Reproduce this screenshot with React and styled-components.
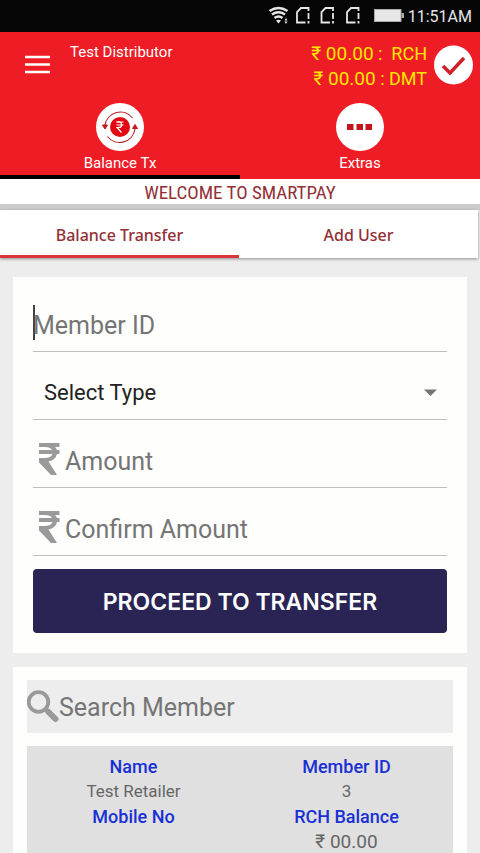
import React, { useState } from "react";
import styled, { createGlobalStyle } from "styled-components";

const GlobalStyle = createGlobalStyle`
  * {
    box-sizing: border-box;
  }
  body {
    margin: 0;
    background: #ededed;
    font-family: "Roboto", sans-serif;
  }
  button,
  input,
  select {
    font-family: inherit;
    margin: 0;
  }
`;

const Screen = styled.div`
  display: flex;
  flex-direction: column;
  height: 100vh;
  overflow: hidden;
`;

const StatusBar = styled.div`
  display: flex;
  align-items: center;
  justify-content: flex-end;
  flex: none;
  height: 32px;
  padding-right: 8px;
  background: #050505;
  color: #e6e6e6;
  font-size: 16px;
`;

const Signals = styled.svg`
  margin-right: 4px;
`;

const Header = styled.header`
  flex: none;
  background: #ee1c25;
  color: #ffffff;
`;

const TopRow = styled.div`
  display: flex;
  height: 66px;
  padding: 10px 7px 0 24px;
`;

const IconButton = styled.button`
  display: flex;
  align-self: flex-start;
  padding: 0;
  border: none;
  background: none;
  cursor: pointer;
`;

const UserName = styled.div`
  flex: 1;
  margin-left: 20px;
  font-size: 15px;
  line-height: 20px;
`;

const Balances = styled.div`
  margin-right: 7px;
  color: #ffe600;
  font-size: 18px;
  line-height: 24px;
  text-align: right;
  white-space: pre;
`;

const BalanceRow = styled.div`
  height: 25px;
`;

const Money = styled.span`
  font-size: 19px;
`;

const Menu = styled.nav`
  display: grid;
  grid-template-columns: 1fr 1fr;
`;

const MenuItem = styled.button`
  display: flex;
  flex-direction: column;
  align-items: center;
  height: 81px;
  padding: 5px 0 0;
  border: none;
  border-bottom: 4px solid ${(props) => (props.$active ? "#000000" : "#ee1c25")};
  background: none;
  color: #ffffff;
  font-size: 15px;
  line-height: 24px;
  cursor: pointer;
`;

const Welcome = styled.div`
  flex: none;
  height: 31px;
  border-bottom: 6px solid #cccccc;
  background: #ffffff;
  color: #923036;
  font-family: "Roboto Condensed", "Liberation Sans Narrow", "Roboto", sans-serif;
  font-size: 19px;
  line-height: 27px;
  text-align: center;
`;

const Tabs = styled.div`
  display: grid;
  grid-template-columns: 1fr 1fr;
  flex: none;
  margin-right: 2px;
  background: #ffffff;
  box-shadow: 0 1px 3px rgba(0, 0, 0, 0.4);
`;

const Tab = styled.button`
  height: 48px;
  padding: 4px 0 0;
  border: none;
  border-bottom: 3px solid ${(props) => (props.$active ? "#d9343a" : "#ffffff")};
  background: none;
  color: #923036;
  font-family: "Noto Sans", sans-serif;
  font-size: 16px;
  font-weight: 500;
  cursor: pointer;
`;

const Content = styled.main`
  display: flex;
  flex-direction: column;
  flex: 1;
  gap: 14px;
  padding: 19px 13px;
  overflow-y: auto;
  scrollbar-width: none;
`;

const Card = styled.section`
  flex: none;
  padding: ${(props) => props.$padding};
  background: #fefefd;
`;

const Field = styled.label`
  display: flex;
  align-items: center;
  height: 68px;
  padding: ${(props) => props.$padding || "16px 0 0"};
  border-bottom: 1px solid #bdbdbd;
`;

const Caret = styled.span`
  width: 2px;
  height: 35px;
  margin: 0 -2px 6px 0;
  background: #444444;
`;

const TextInput = styled.input`
  flex: 1;
  min-width: 0;
  padding: 0;
  border: none;
  outline: none;
  background: none;
  color: #222222;
  font-size: 25px;
  line-height: 32px;

  &::placeholder {
    color: #757575;
    opacity: 1;
  }
`;

const TypeSelect = styled.select`
  flex: 1;
  appearance: none;
  padding: 0;
  border: none;
  outline: none;
  background: none;
  color: #222222;
  font-size: 22px;
  line-height: 32px;
`;

const Rupee = styled.svg`
  margin-bottom: 6px;
`;

const SubmitButton = styled.button`
  display: block;
  width: 100%;
  height: 64px;
  margin-top: 13px;
  padding: 2px 0 0;
  border: none;
  border-radius: 4px;
  background: #292454;
  color: #ffffff;
  font-family: "Inter", sans-serif;
  font-size: 23px;
  font-weight: 600;
  cursor: pointer;
`;

const SearchBox = styled.label`
  display: flex;
  align-items: center;
  height: 53px;
  margin-bottom: 13px;
  padding-top: 2px;
  background: #ededed;
`;

const MemberCard = styled.dl`
  display: grid;
  grid-template-columns: 1fr 1fr;
  margin: 0;
  padding: 8px 0;
  background: #e0e0e0;
  font-size: 18px;
  line-height: 25px;
  text-align: center;
`;

const Label = styled.dt`
  color: #1a30d4;
  font-weight: 500;
`;

const Value = styled.dd`
  height: 25px;
  margin: 0;
  color: #666666;
  font-size: 17px;
`;

function RupeeIcon() {
  return (
    <Rupee width="32" height="34" viewBox="0 0 32 34" aria-hidden="true">
      <path d="M6 1H26.500V5H22Q23.500 6.500 24 8H26.500V12H24Q22.500 18 15.500 19.500L24 33H18L6 20.500V16H12Q18 16 19.500 12H6V8H19Q17.500 5 12 5H6Z" fill="#9a9a9a" />
    </Rupee>
  );
}

function TransferIcon() {
  return (
    <svg width="48" height="48" viewBox="0 0 48 48" aria-hidden="true">
      <circle cx="24" cy="24" r="24" fill="#ffffff" />
      <circle cx="24" cy="24" r="10" fill="#e30613" />
      <g fill="none" stroke="#b5232b" strokeWidth="1.2">
        <path d="M36.500 15A15.500 15.500 0 0 0 9 22" />
        <path d="M11.500 33.500A15.500 15.500 0 0 0 39 26" />
      </g>
      <path d="M6.500 22H11.500L9 26ZM36.500 25.500H41.500L39 21.500Z" fill="#c4161c" stroke="#c4161c" />
      <g fill="none" stroke="#ffffff" strokeWidth="1.2">
        <path d="M20.500 19H27.500M20.500 22H27.500" />
        <path d="M20.500 19H23C26.500 19 26.500 24.500 23 24.500H21L25.500 29.500" />
      </g>
    </svg>
  );
}

function ExtrasIcon() {
  return (
    <svg width="48" height="48" viewBox="0 0 48 48" aria-hidden="true">
      <circle cx="24" cy="24" r="24" fill="#ffffff" />
      <path d="M11 21H17.500V27H11ZM20.500 21H27V27H20.500ZM29.500 21H36V27H29.500Z" fill="#c4161c" />
    </svg>
  );
}

function StatusIcons() {
  return (
    <Signals width="137" height="20" viewBox="0 0 137 20" aria-hidden="true">
      <g fill="none" stroke="#e6e6e6" strokeWidth="2.400">
        <path d="M2.500 5Q11.500 -1 20.500 5M5 8.500Q11.500 4 18 8.500M7.500 12Q11.500 9 15.500 12" />
      </g>
      <path d="M9 14.500Q11.500 13 14 14.500L11.500 17.500ZM19 12L20.500 14.500H17.500ZM19 18L17.500 15.500H20.500Z" fill="#e6e6e6" />
      {[29, 53.5, 79].map((x) => (
        <g key={x} transform={`translate(${x} 1)`} fill="none" stroke="#e6e6e6" strokeWidth="1.8">
          <path d="M9.500 15.500H1V5L5 1H12.500V4M12.500 6V12M12.500 14V16.500" />
        </g>
      ))}
      <rect x="107.500" y="3.500" width="26.500" height="12" fill="#e6e6e6" stroke="#aaaaaa" />
      <rect x="134.500" y="7" width="2.500" height="5" fill="#aaaaaa" />
    </Signals>
  );
}

const members = [
  { name: "Test Retailer", id: "3", mobile: "", rch: "₹ 00.00" },
];

function App() {
  const [menu, setMenu] = useState("balance");
  const [tab, setTab] = useState("transfer");

  return (
    <>
      <GlobalStyle />
      <Screen>
        <StatusBar>
          <StatusIcons />
          11:51AM
        </StatusBar>
        <Header>
          <TopRow>
            <IconButton type="button" aria-label="Menu">
              <svg width="26" height="44" viewBox="0 0 26 44" aria-hidden="true">
                <path d="M1 15H26M1 22.500H26M1 30H26" stroke="#ffffff" strokeWidth="2.400" />
              </svg>
            </IconButton>
            <UserName>Test Distributor</UserName>
            <Balances>
              <BalanceRow>
                <Money>₹ 00.00</Money> :  RCH
              </BalanceRow>
              <BalanceRow>
                <Money>₹ 00.00</Money> : DMT
              </BalanceRow>
            </Balances>
            <IconButton type="button" aria-label="Confirm">
              <svg width="39" height="46" viewBox="0 0 39 46" aria-hidden="true">
                <circle cx="19.500" cy="23" r="19.500" fill="#ffffff" />
                <path d="M9 24L16 31L30 16" fill="none" stroke="#cf2027" strokeWidth="3.500" />
              </svg>
            </IconButton>
          </TopRow>
          <Menu>
            <MenuItem type="button" $active={menu === "balance"} onClick={() => setMenu("balance")}>
              <TransferIcon />
              Balance Tx
            </MenuItem>
            <MenuItem type="button" $active={menu === "extras"} onClick={() => setMenu("extras")}>
              <ExtrasIcon />
              Extras
            </MenuItem>
          </Menu>
        </Header>
        <Welcome>WELCOME TO SMARTPAY</Welcome>
        <Tabs>
          <Tab type="button" $active={tab === "transfer"} onClick={() => setTab("transfer")}>
            Balance Transfer
          </Tab>
          <Tab type="button" $active={tab === "user"} onClick={() => setTab("user")}>
            Add User
          </Tab>
        </Tabs>
        <Content>
          <Card as="form" $padding="7px 20px 20px" onSubmit={(e) => e.preventDefault()}>
            <Field>
              <Caret />
              <TextInput placeholder="Member ID" aria-label="Member ID" />
            </Field>
            <Field $padding="14px 9px 0 11px">
              <TypeSelect aria-label="Select Type">
                <option>Select Type</option>
              </TypeSelect>
              <svg width="15" height="8" viewBox="0 0 15 8" aria-hidden="true">
                <path d="M1 0.500H14L7.500 7Z" fill="#757575" />
              </svg>
            </Field>
            <Field>
              <RupeeIcon />
              <TextInput placeholder="Amount" aria-label="Amount" />
            </Field>
            <Field>
              <RupeeIcon />
              <TextInput placeholder="Confirm Amount" aria-label="Confirm Amount" />
            </Field>
            <SubmitButton type="submit">PROCEED TO TRANSFER</SubmitButton>
          </Card>
          <Card $padding="13px 14px">
            <SearchBox>
              <svg width="32" height="36" viewBox="0 0 32 36" aria-hidden="true">
                <circle cx="11.500" cy="12" r="9.800" fill="none" stroke="#999999" strokeWidth="3.800" />
                <path d="M18 19L21 22" stroke="#999999" strokeWidth="3.500" />
                <path d="M21.500 22L28.500 29" stroke="#999999" strokeWidth="6" strokeLinecap="round" />
              </svg>
              <TextInput placeholder="Search Member" aria-label="Search Member" />
            </SearchBox>
            {members.map((el) => (
              <MemberCard key={el.id}>
                <div>
                  <Label>Name</Label>
                  <Value>{el.name}</Value>
                  <Label>Mobile No</Label>
                  <Value>{el.mobile}</Value>
                </div>
                <div>
                  <Label>Member ID</Label>
                  <Value>{el.id}</Value>
                  <Label>RCH Balance</Label>
                  <Value>
                    <Money>{el.rch}</Money>
                  </Value>
                </div>
              </MemberCard>
            ))}
          </Card>
        </Content>
      </Screen>
    </>
  );
}

export default App;
